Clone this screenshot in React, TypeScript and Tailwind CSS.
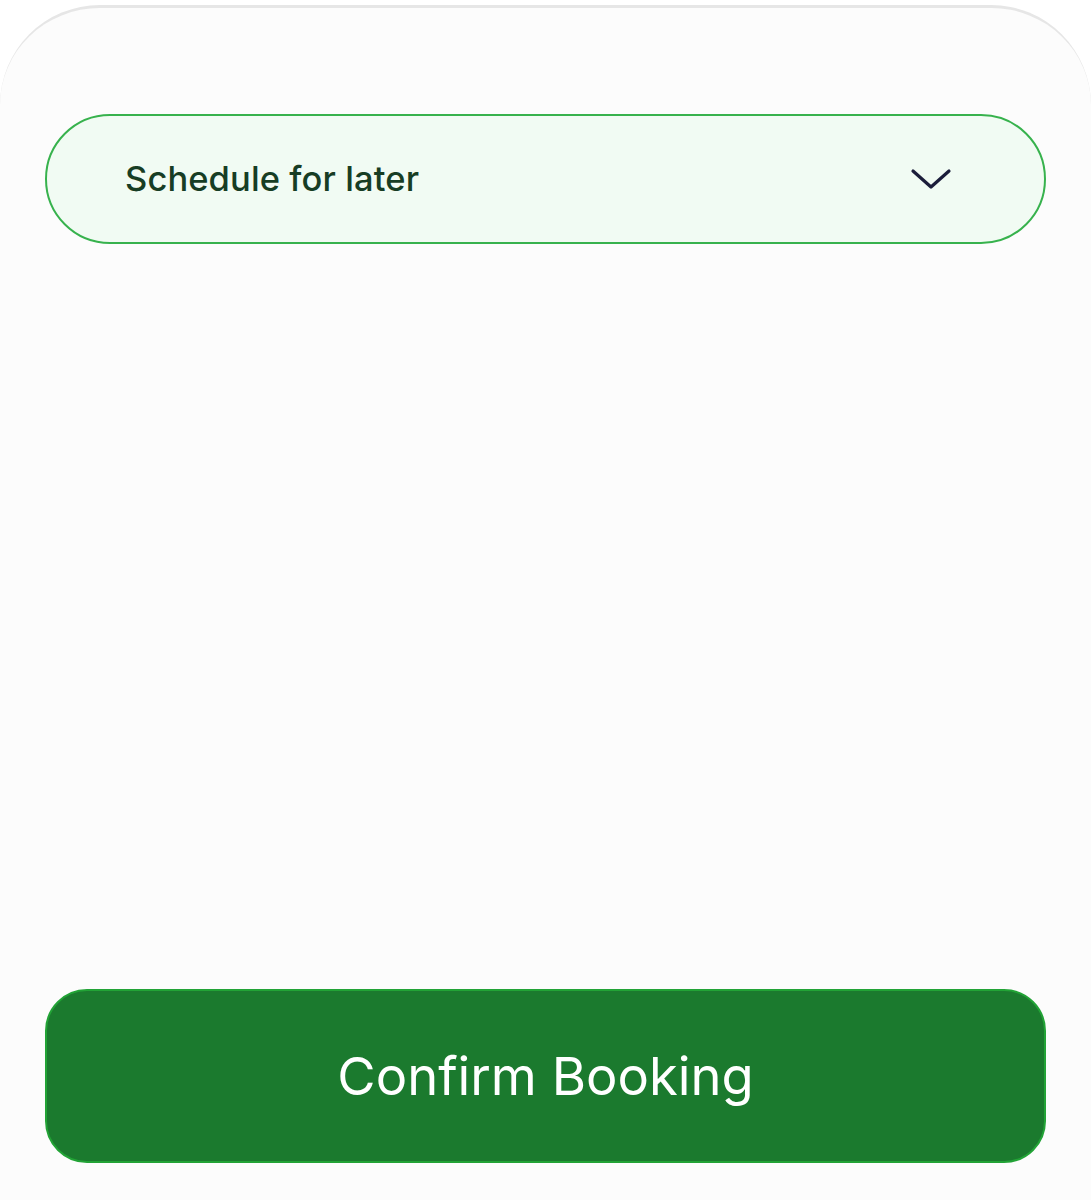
import React from "react";

export default function App() {
  return (
    <div className="w-[1091px] h-[1200px] bg-white overflow-hidden" style={{ fontFamily: "Inter, 'Noto Sans', sans-serif" }}>
      <div className="mt-[5px] h-[1195px] rounded-t-[100px] border-t-[3px] border-[#e6e6e6] bg-[#fcfcfc] px-[45px] pt-[106px] flex flex-col">
        <div className="h-[130px] rounded-full border-2 border-[#37b24d] bg-[#f1fbf3] flex items-center pl-[78px] pr-[92px]">
          <span className="flex-1 text-[34.5px] font-medium text-[#173d24] leading-none tracking-[0.1px]">Schedule for later</span>
          <svg width="42" height="26" viewBox="0 0 42 26" fill="none" className="ml-auto">
            <path d="M3 5 L21 21 L39 5" stroke="#1b1d3a" strokeWidth="3.2" strokeLinecap="round" strokeLinejoin="round" />
          </svg>
        </div>
        <div className="flex-1" />
        <button className="mb-[37px] h-[174px] w-full rounded-[42px] border-2 border-[#22a336] bg-[#1b7a2e] text-white text-[52.5px] font-normal flex items-center justify-center">
          Confirm Booking
        </button>
      </div>
    </div>
  );
}
